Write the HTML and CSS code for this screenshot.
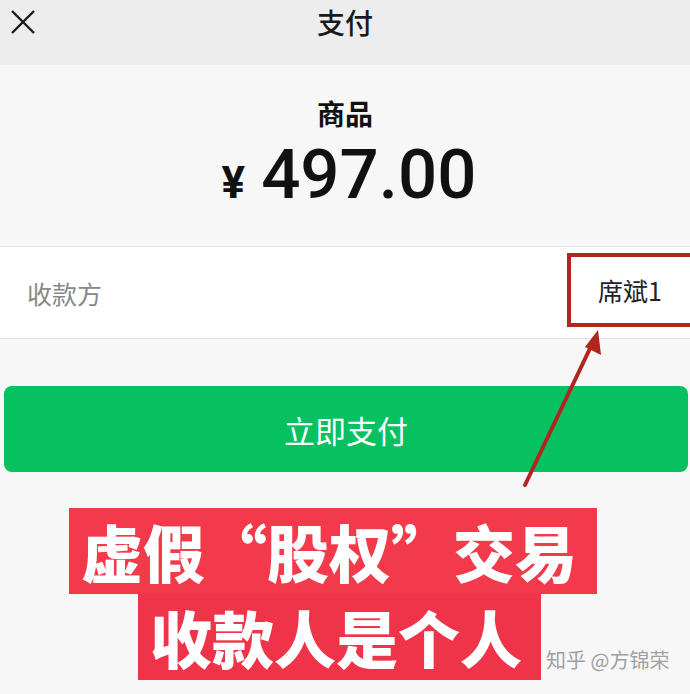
FILE: index.html
```html
<!DOCTYPE html>
<html lang="zh-CN">
<head>
    <meta charset="UTF-8">
    <meta name="viewport" content="width=device-width, initial-scale=1.0">
    <title>支付</title>
    <link rel="stylesheet" href="styles.css">
</head>
<body>
    <div class="page">
        <header class="topbar">
            <svg class="close" width="28" height="28" viewBox="0 0 28 28">
                <path d="M3 3 L25 25 M25 3 L3 25" stroke="#1a1a1a" stroke-width="2.4" fill="none"/>
            </svg>
            <h1 class="title">支付</h1>
        </header>

        <section class="goods">
            <div class="goods-name">商品</div>
            <div class="amount"><span class="yen">¥</span><span class="num">497.00</span></div>
        </section>

        <div class="payee">
            <span class="payee-label">收款方</span>
            <span class="payee-name">席斌1</span>
        </div>

        <button class="pay-btn">立即支付</button>

        <div class="callout">
            <div class="tag tag-first">虚假“股权”交易</div>
            <div class="tag-row">
                <div class="tag tag-second">收款人是个人</div>
                <span class="mark">知乎 @方锦荣</span>
            </div>
        </div>

        <!-- arrow from the callout up to the payee name -->
        <svg class="arrow" width="690" height="694" viewBox="0 0 690 694">
            <line x1="525" y1="485" x2="594" y2="340" stroke="#b0261f" stroke-width="4" stroke-linecap="round"/>
            <polygon points="598,330 601,355 585,347" fill="#b0261f"/>
        </svg>
    </div>
</body>
</html>
```

FILE: styles.css
```css
body {
    margin: 0;
    background: #f7f7f7;
    font-family: "Noto Sans CJK SC", "Noto Sans", sans-serif;
}
.page {
    position: relative;
    width: 690px;
    height: 694px;
    overflow: hidden;
}
.topbar {
    height: 65px;
    background: #ededed;
    display: flex;
    align-items: center;
    justify-content: center;
    position: relative;
}
.close {
    position: absolute;
    left: 9px;
    top: 8px;
}
.title {
    margin: 0 0 22px;
    font-size: 28px;
    font-weight: 500;
    color: #1a1a1a;
}
.goods {
    text-align: center;
    padding-top: 28px;
    height: 153px;
    box-sizing: border-box;
}
.goods-name {
    font-size: 28px;
    font-weight: 700;
    color: #111;
    line-height: 40px;
}
.amount {
    display: flex;
    justify-content: center;
    align-items: baseline;
    margin-top: 2px;
    margin-left: 8px;
}
.yen {
    font-family: Roboto, "Noto Sans", sans-serif;
    font-size: 44px;
    font-weight: 700;
    margin-right: 16px;
    color: #111;
}
.num {
    font-family: Roboto, "Noto Sans", sans-serif;
    font-size: 69px;
    font-weight: 500;
    line-height: 80px;
    color: #111;
}
.payee {
    margin-top: 28px;
    height: 91px;
    background: #fff;
    border-top: 1px solid #e3e3e3;
    border-bottom: 1px solid #e3e3e3;
    display: flex;
    align-items: center;
    justify-content: space-between;
    padding-left: 27px;
}
.payee-label {
    font-size: 25px;
    color: #888;
}
.payee-name {
    font-size: 25px;
    color: #222;
    border: 4px solid #b0261f;
    height: 66px;
    line-height: 66px;
    padding: 0 30px 0 27px;
    margin-right: -6px;
    margin-top: -6px;
}
.pay-btn {
    display: block;
    margin: 47px 2px 0 4px;
    width: 684px;
    height: 86px;
    border: none;
    border-radius: 8px;
    background: #07c160;
    color: #fff;
    font-family: "Noto Sans CJK SC", sans-serif;
    font-size: 31px;
    padding: 0;
}
.callout {
    margin-top: 36px;
    display: flex;
    flex-direction: column;
    align-items: flex-start;
}
.tag {
    background: #f23a4a;
    color: #fff;
    font-size: 62px;
    font-weight: 900;
    line-height: 86px;
    white-space: nowrap;
}
.tag-first {
    margin-left: 69px;
    padding: 0 20px 0 12px;
}
.tag-row {
    display: flex;
    align-items: flex-end;
    margin-left: 138px;
}
.tag-second {
    background: #ef3348;
    padding: 0 19px 0 12px;
}
.mark {
    margin-left: 5px;
    margin-bottom: 6px;
    font-size: 20px;
    color: #a0a0a0;
    white-space: nowrap;
}
.arrow {
    position: absolute;
    left: 0;
    top: 0;
    pointer-events: none;
}
```
